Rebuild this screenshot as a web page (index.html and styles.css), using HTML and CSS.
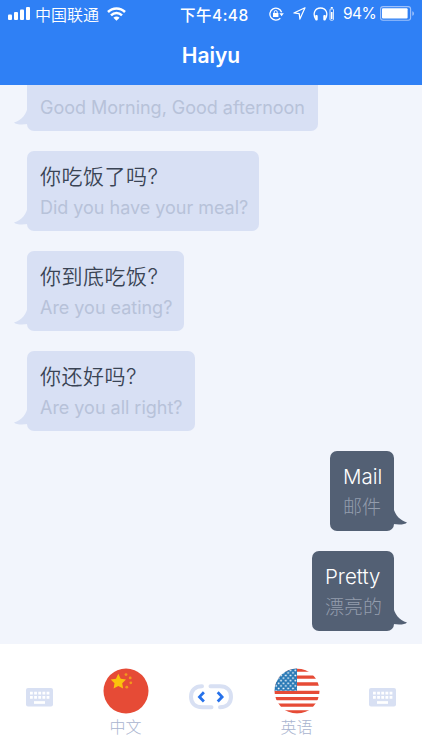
FILE: index.html
```html
<!DOCTYPE html>
<html lang="zh-CN">
<head>
    <meta charset="UTF-8">
    <meta name="viewport" content="width=device-width, initial-scale=1.0">
    <title>Haiyu</title>
    <link rel="stylesheet" href="styles.css">
</head>
<body>
    <header>
        <div class="status-bar">
            <div class="status-left">
                <svg class="signal" width="22" height="13" viewBox="0 0 22 13" fill="#fff">
                    <rect x="0" y="7.5" width="4" height="5.5" rx="1"/>
                    <rect x="6" y="5" width="4" height="8" rx="1"/>
                    <rect x="12" y="2.5" width="4" height="10.5" rx="1"/>
                    <rect x="18" y="0" width="4" height="13" rx="1"/>
                </svg>
                <span class="carrier">中国联通</span>
                <svg class="wifi" width="19" height="14" viewBox="0 0 19 14" fill="none" stroke="#fff" stroke-width="2.5">
                    <path d="M1 5C5.8 .2 13.2 .2 18 5"/>
                    <path d="M4 8.3C7.2 5.2 11.8 5.2 15 8.3"/>
                    <path d="M6.4 10.8C8.2 9 10.8 9 12.6 10.8L9.5 13.8z" fill="#fff" stroke="none"/>
                </svg>
            </div>
            <div class="time">下午4:48</div>
            <div class="status-right">
                <svg class="lock" width="15" height="14" viewBox="0 0 15 14" fill="none" stroke="#fff" stroke-width="1.3">
                    <path d="M12.6 5.2A6 6 0 1 0 11.3 11.2"/>
                    <path d="M10.4 6.2h4.4l-2.2 3z" fill="#fff" stroke="none"/>
                    <rect x="4" y="6" width="5.4" height="4" fill="#fff" stroke="none"/>
                    <path d="M5.2 6.3V5a1.5 1.5 0 0 1 3 0v1.3" stroke-width="1"/>
                </svg>
                <svg class="location" width="13" height="13" viewBox="0 0 13 13" fill="none" stroke="#fff" stroke-width="1.2" stroke-linejoin="round">
                    <path d="M12 .8L.9 6l5.3.7.7 5.4z"/>
                </svg>
                <svg class="headphones" width="22" height="14" viewBox="0 0 22 14" fill="none" stroke="#fff">
                    <path d="M2.7 12.3C-.6 6.5 1.8 1 7.5 1s8.1 5.5 4.8 11.3" stroke-width="1.3"/>
                    <rect x="2.2" y="8" width="2.5" height="5.5" rx="1" fill="#fff" stroke="none"/>
                    <rect x="10.3" y="8" width="2.5" height="5.5" rx="1" fill="#fff" stroke="none"/>
                    <rect x="17" y="2" width="3.5" height="11.2" rx=".8" stroke-width=".8"/>
                    <path d="M17.8 .8h2M18.75 5v7" stroke-width="1.6"/>
                </svg>
                <span class="percent">94%</span>
                <svg class="battery" width="35" height="15" viewBox="0 0 35 15">
                    <rect x=".6" y=".6" width="30" height="13.6" rx="2.5" fill="none" stroke="#9fc1fb" stroke-width="1.1"/>
                    <rect x="2" y="2.2" width="25.6" height="10.4" rx="1" fill="#fff"/>
                    <path d="M32.3 5.2c2.2.6 2.2 4 0 4.6z" fill="#9fc1fb"/>
                </svg>
            </div>
        </div>
        <h1>Haiyu</h1>
    </header>

    <!-- 聊天记录 -->
    <main class="chat">
        <div class="bubble left greeting">
            <p class="trans">Good Morning, Good afternoon</p>
            <svg class="tail" width="14" height="22" viewBox="0 0 14 22"><path d="M14 0C13 9 8 15 0 17.5c2 2 7 2.6 14 1.6z"/></svg>
        </div>
        <div class="bubble left meal">
            <p class="text">你吃饭了吗?</p>
            <p class="trans">Did you have your meal?</p>
            <svg class="tail" width="14" height="22" viewBox="0 0 14 22"><path d="M14 0C13 9 8 15 0 17.5c2 2 7 2.6 14 1.6z"/></svg>
        </div>
        <div class="bubble left eating">
            <p class="text">你到底吃饭?</p>
            <p class="trans">Are you eating?</p>
            <svg class="tail" width="14" height="22" viewBox="0 0 14 22"><path d="M14 0C13 9 8 15 0 17.5c2 2 7 2.6 14 1.6z"/></svg>
        </div>
        <div class="bubble left alright">
            <p class="text">你还好吗?</p>
            <p class="trans">Are you all right?</p>
            <svg class="tail" width="14" height="22" viewBox="0 0 14 22"><path d="M14 0C13 9 8 15 0 17.5c2 2 7 2.6 14 1.6z"/></svg>
        </div>
        <div class="bubble right mail">
            <p class="text">Mail</p>
            <p class="trans">邮件</p>
            <svg class="tail" width="14" height="22" viewBox="0 0 14 22"><path d="M14 0C13 9 8 15 0 17.5c2 2 7 2.6 14 1.6z"/></svg>
        </div>
        <div class="bubble right pretty">
            <p class="text">Pretty</p>
            <p class="trans">漂亮的</p>
            <svg class="tail" width="14" height="22" viewBox="0 0 14 22"><path d="M14 0C13 9 8 15 0 17.5c2 2 7 2.6 14 1.6z"/></svg>
        </div>
    </main>

    <footer>
        <svg class="keyboard" width="27" height="19" viewBox="0 0 27 19">
            <rect width="27" height="18.5" rx="2" fill="#d8e0f3"/>
            <path d="M4 5.2h19.5M4 9.4h19.5" stroke="#fff" stroke-width="2.7" stroke-dasharray="2.8 1.35"/>
            <path d="M8 14.5h11" stroke="#fff" stroke-width="2.7"/>
        </svg>
        <div class="lang">
            <svg width="46" height="46" viewBox="0 0 46 46">
                <circle cx="23" cy="23" r="22.5" fill="#e64b36"/>
                <path d="M15.3 5.8l2.4 4.9 5.3.8-3.8 3.7.9 5.3-4.8-2.5-4.7 2.5.9-5.3-3.8-3.7 5.3-.8z" fill="#fbc20c"/>
                <g fill="#f29a1c">
                    <circle cx="23" cy="6.6" r="1.4"/>
                    <circle cx="27.2" cy="9.9" r="1.4"/>
                    <circle cx="27.8" cy="14.8" r="1.4"/>
                    <circle cx="23.8" cy="19.2" r="1.4"/>
                </g>
            </svg>
            <span>中文</span>
        </div>
        <svg class="switch" width="44" height="26" viewBox="0 0 44 26" fill="none" stroke-linecap="round">
            <g stroke="#d8e0f3" stroke-width="4">
                <path d="M13 2.3C6 2.3 2 6.5 2 12.8S6 23.3 13 23.3H22.5"/>
                <path d="M21.5 2.3H31C38 2.3 42 6.5 42 12.8S38 23.3 31 23.3"/>
            </g>
            <path d="M14.9 8.3L10.5 12.9l4.4 4.6M28.7 8.3l4.4 4.6-4.4 4.6" stroke="#2671ea" stroke-width="2.8" stroke-linecap="butt"/>
        </svg>
        <div class="lang">
            <svg width="46" height="46" viewBox="0 0 46 46">
                <defs>
                    <clipPath id="round"><circle cx="23" cy="23" r="22.5"/></clipPath>
                    <pattern id="stars" x="1" y="1" width="4.8" height="5.2" patternUnits="userSpaceOnUse">
                        <circle cx="1.2" cy="1.3" r=".95" fill="#fff"/>
                        <circle cx="3.6" cy="3.9" r=".95" fill="#fff"/>
                    </pattern>
                </defs>
                <g clip-path="url(#round)">
                    <rect width="46" height="46" fill="#fff"/>
                    <path d="M0 2.2h46M0 9.1h46M0 16h46M0 24.3h46M0 30.7h46M0 37.2h46M0 44h46" stroke="#e64b36" stroke-width="3.3"/>
                    <rect width="23" height="22.8" fill="#2878b5"/>
                    <rect width="23" height="22.8" fill="url(#stars)"/>
                </g>
            </svg>
            <span>英语</span>
        </div>
        <svg class="keyboard" width="27" height="19" viewBox="0 0 27 19">
            <rect width="27" height="18.5" rx="2" fill="#d8e0f3"/>
            <path d="M4 5.2h19.5M4 9.4h19.5" stroke="#fff" stroke-width="2.7" stroke-dasharray="2.8 1.35"/>
            <path d="M8 14.5h11" stroke="#fff" stroke-width="2.7"/>
        </svg>
    </footer>
</body>
</html>
```
FILE: styles.css
```css
* {
    box-sizing: border-box;
}

body {
    margin: 0;
    height: 750px;
    display: flex;
    flex-direction: column;
    overflow: hidden;
    font-family: Inter, "Noto Sans CJK SC", sans-serif;
    background: #f2f5fc;
}

svg {
    display: block;
    flex: none;
}

header {
    height: 85px;
    flex: none;
    background: #2f80f5;
    color: #fff;
}

.status-bar {
    height: 27px;
    display: grid;
    grid-template-columns: 172px auto 1fr;
    align-items: center;
    padding: 0 7px 0 8px;
    font-size: 16px;
}

.status-left,
.status-right {
    display: flex;
    align-items: center;
}

.status-right {
    justify-content: flex-end;
}

.carrier {
    margin: 0 8px 0 5px;
    font-weight: 350;
}

.time {
    font-size: 15.5px;
    font-weight: 500;
    letter-spacing: 0.5px;
}

.location {
    margin: 0 7px 0 9px;
}

.percent {
    margin: 0 4px 0 8px;
    font-size: 15.5px;
    letter-spacing: -0.6px;
}

h1 {
    margin: 0;
    line-height: 58px;
    font-size: 21px;
    font-weight: 600;
    text-align: center;
}

.chat {
    flex: 1;
    min-height: 0;
    display: flex;
    flex-direction: column;
    justify-content: flex-end;
    gap: 20px;
    padding: 0 28px 13px 27px;
    overflow: hidden;
}

.bubble {
    position: relative;
    flex: none;
    display: flex;
    flex-direction: column;
    justify-content: flex-end;
    height: 80px;
    padding: 0 13px 8px;
    border-radius: 7px;
    white-space: nowrap;
}

.bubble p {
    margin: 0;
}

.text {
    font-size: 21px;
    font-weight: 350;
    line-height: 30px;
    letter-spacing: 0.5px;
}

.trans {
    font-size: 18px;
    line-height: 31px;
    letter-spacing: -0.02px;
}

.left {
    align-self: flex-start;
    background: #d8e0f4;
    color: #3a4454;
}

.left .trans {
    color: #b7c2d9;
}

.right {
    align-self: flex-end;
    background: #536074;
    color: #fff;
}

.right .text {
    font-size: 20.5px;
    letter-spacing: 0;
}

.right .trans {
    padding-top: 1px;
    line-height: 30px;
    font-size: 19px;
    font-weight: 300;
    letter-spacing: 0;
    color: #939dad;
}

.greeting { width: 291px; }
.meal { width: 232px; }
.eating { width: 157px; }
.alright { width: 168px; }
.mail { width: 64px; }
.pretty { width: 82px; }

.tail {
    position: absolute;
    bottom: 4px;
    left: -13px;
    fill: #d8e0f4;
}

.right .tail {
    left: auto;
    right: -13px;
    transform: scaleX(-1);
    fill: #536074;
}

footer {
    height: 106px;
    flex: none;
    display: grid;
    grid-template-columns: 27px 145px 26px 145px 27px;
    justify-content: center;
    justify-items: center;
    align-items: start;
    padding: 24px 0 0;
    background: #fff;
}

.keyboard {
    margin-top: 20px;
}

.lang {
    width: 46px;
    text-align: center;
    font-size: 16px;
    font-weight: 300;
    line-height: 26px;
    color: #a9b4cf;
}

.switch {
    margin: 16px -9px 0;
}
```
